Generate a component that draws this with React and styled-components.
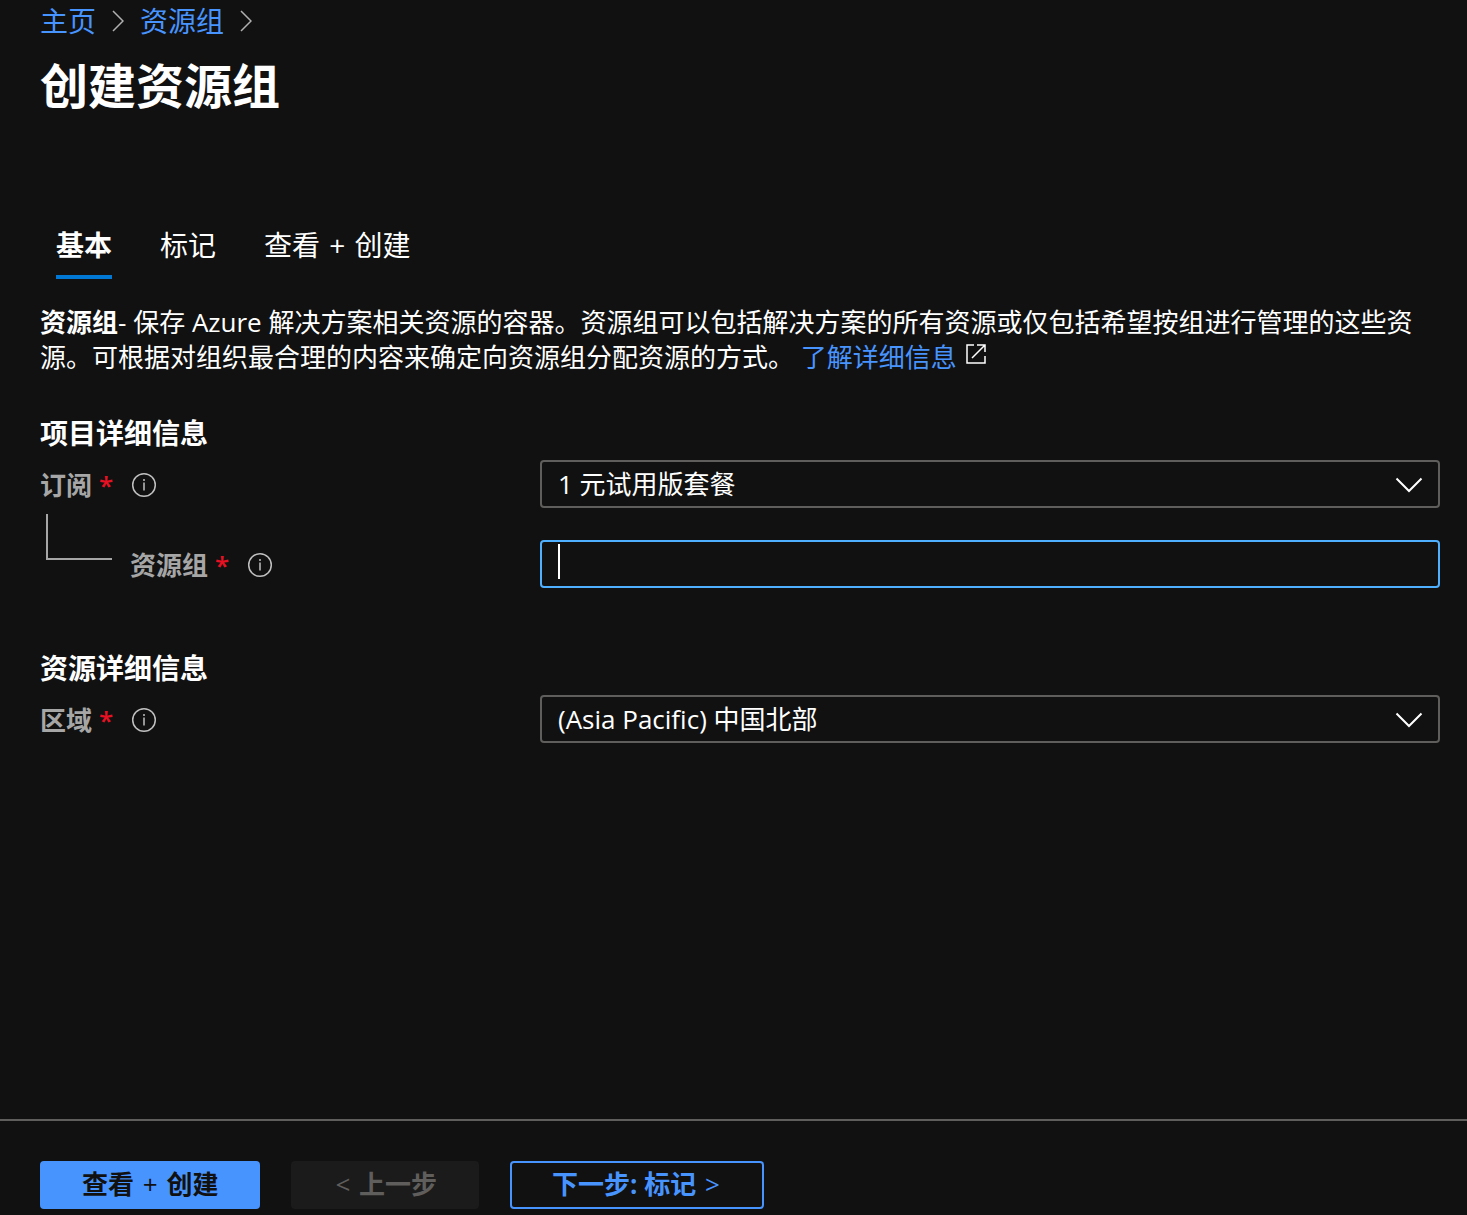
import React, { useState } from 'react';
import styled, { createGlobalStyle, css } from 'styled-components';

const GlobalStyle = createGlobalStyle`
	:root {
		--bg: #111111;
		--text: #ffffff;
		--label: #a6a6a6;
		--border: #605e5c;
		--accent: #4894fe;
		--focus: #4fb0ff;
		--required: #e81123;
	}

	*,
	*:before,
	*:after {
		box-sizing: border-box;
	}

	body {
		margin: 0;
		background-color: var(--bg);
		color: var(--text);
	}

	body,
	button,
	input,
	select {
		font-family: 'Open Sans', 'Noto Sans CJK SC', sans-serif;
		font-size: 26px;
		line-height: 35px;
	}
`;

const Page = styled.div`
	display: flex;
	flex-direction: column;
	min-height: 100vh;
`;

const Main = styled.main`
	flex: 1;
	padding: 0 27px 40px 40px;
`;

const Breadcrumb = styled.nav`
	display: flex;
	align-items: center;
	height: 42px;
	font-size: 28px;
`;

const Link = styled.a`
	color: var(--accent);
	text-decoration: none;
`;

const CrumbArrow = styled.svg`
	width: 12px;
	height: 22px;
	margin: 0 16px;
	fill: none;
	stroke: #b0b0b0;
	stroke-width: 1.5;
`;

const Title = styled.h1`
	margin: 14px 0 0;
	font-size: 48px;
	font-weight: 700;
	line-height: 60px;
`;

const Tabs = styled.div`
	display: flex;
	gap: 48px;
	margin-top: 107px;
	padding-left: 16px;
`;

const Tab = styled.button`
	height: 56px;
	padding: 0 0 7px;
	border: 0;
	border-bottom: 4px solid transparent;
	background: none;
	color: var(--text);
	font-size: 28px;

	${({ $active }) =>
		$active &&
		css`
			border-color: #0078d4;
			font-weight: 700;
		`}
`;

const Description = styled.p`
	margin: 26px 0 0;
`;

const ExternalIcon = styled.svg`
	width: 22px;
	height: 22px;
	margin-left: 8px;
	vertical-align: 2px;
	fill: none;
	stroke: var(--text);
	stroke-width: 1.5;
`;

const Section = styled.section`
	margin-top: 40px;
	padding-bottom: 22px;
`;

const SectionTitle = styled.h2`
	margin: 0 0 9px;
	font-size: 28px;
	font-weight: 700;
	line-height: 36px;
`;

const Row = styled.div`
	display: grid;
	grid-template-columns: 500px 1fr;
	align-items: center;
	min-height: 48px;

	& + & {
		margin-top: 32px;
	}
`;

const LabelCell = styled.div`
	display: flex;
	align-items: center;
	height: 48px;
	padding-top: 2px;
`;

// elbow line that ties a nested field to the one above it
const Connector = styled.span`
	align-self: flex-start;
	width: 66px;
	height: 46px;
	margin: -28px 18px 0 6px;
	border: solid var(--label);
	border-width: 0 0 2px 2px;
`;

const Label = styled.label`
	color: var(--label);
	font-weight: 700;
`;

const Required = styled.span`
	width: 14px;
	margin-left: 7px;
	color: var(--required);
	font-weight: 600;
`;

const InfoIcon = styled.svg`
	width: 26px;
	height: 26px;
	margin-left: 18px;
	fill: none;
	stroke: #c0c0c0;
	stroke-width: 1.5;
`;

const Control = styled.div`
	position: relative;
`;

const fieldStyles = css`
	display: block;
	width: 100%;
	height: 48px;
	padding: 0 16px;
	border: 2px solid var(--border);
	border-radius: 4px;
	outline: none;
	background-color: var(--bg);
	color: var(--text);
`;

const Select = styled.select`
	${fieldStyles}
	appearance: none;
`;

const Input = styled.input`
	${fieldStyles}
	border-color: var(--focus);
	caret-color: transparent;
`;

const Caret = styled.span`
	position: absolute;
	top: 4px;
	left: 18px;
	width: 2px;
	height: 35px;
	background-color: var(--text);
	pointer-events: none;
`;

const SelectArrow = styled.svg`
	position: absolute;
	top: 17px;
	right: 17px;
	width: 28px;
	height: 16px;
	fill: none;
	stroke: var(--text);
	stroke-width: 2;
	pointer-events: none;
`;

const Footer = styled.footer`
	display: flex;
	gap: 31px;
	padding: 40px 40px 6px;
	border-top: 2px solid #605e5c;
`;

const Button = styled.button`
	height: 48px;
	padding: 0 40px 2px;
	border: 2px solid var(--accent);
	border-radius: 4px;
	background-color: ${({ $primary }) => ($primary ? 'var(--accent)' : 'transparent')};
	color: ${({ $primary }) => ($primary ? 'var(--bg)' : 'var(--accent)')};
	font-weight: 700;

	&:disabled {
		border-color: #1b1b1b;
		background-color: #1b1b1b;
		color: #605e5c;
	}
`;

const Symbol = styled.span`
	margin: 0 2px;
	font-weight: 400;
`;

const Crumb = ({ children }) => (
	<>
		<Link href='#'>{children}</Link>
		<CrumbArrow viewBox='0 0 12 22' aria-hidden='true'>
			<path d='M1 1 L11 11 L1 21' />
		</CrumbArrow>
	</>
);

const Field = ({ id, label, nested, children }) => (
	<Row>
		<LabelCell>
			{nested && <Connector />}
			<Label htmlFor={id}>{label}</Label>
			<Required>*</Required>
			<InfoIcon viewBox='0 0 26 26' aria-hidden='true'>
				<circle cx='13' cy='13' r='11.3' />
				<path d='M13 10.5 V18.5 M13 7 V9' />
			</InfoIcon>
		</LabelCell>
		<Control>{children}</Control>
	</Row>
);

const Dropdown = ({ id, options }) => (
	<>
		<Select id={id}>
			{options.map((option) => (
				<option key={option}>{option}</option>
			))}
		</Select>
		<SelectArrow viewBox='0 0 28 16' aria-hidden='true'>
			<path d='M1.5 1.5 L14 14 L26.5 1.5' />
		</SelectArrow>
	</>
);

const tabs = [
	{ id: 'basics', title: '基本' },
	{ id: 'tags', title: '标记' },
	{
		id: 'review',
		title: (
			<>
				查看 <Symbol>+</Symbol> 创建
			</>
		),
	},
];

const App = () => {
	const [active, setActive] = useState('basics');
	const [name, setName] = useState('');

	return (
		<>
			<GlobalStyle />
			<Page>
				<Main>
					<Breadcrumb>
						<Crumb>主页</Crumb>
						<Crumb>资源组</Crumb>
					</Breadcrumb>
					<Title>创建资源组</Title>
					<Tabs role='tablist'>
						{tabs.map(({ id, title }) => (
							<Tab
								key={id}
								role='tab'
								aria-selected={id === active}
								$active={id === active}
								onClick={() => setActive(id)}
							>
								{title}
							</Tab>
						))}
					</Tabs>
					<Description>
						<strong>资源组</strong>- 保存 Azure
						解决方案相关资源的容器。资源组可以包括解决方案的所有资源或仅包括希望按组进行管理的这些资源。可根据对组织最合理的内容来确定向资源组分配资源的方式。{' '}
						<Link href='#'>
							了解详细信息
							<ExternalIcon viewBox='0 0 22 22' aria-hidden='true'>
								<path d='M9 2 H2 V20 H20 V13 M12 2 H20 V9 M20 2 L7 15' />
							</ExternalIcon>
						</Link>
					</Description>
					<Section>
						<SectionTitle>项目详细信息</SectionTitle>
						<Field id='subscription' label='订阅'>
							<Dropdown id='subscription' options={['1 元试用版套餐']} />
						</Field>
						<Field id='group' label='资源组' nested>
							<Input
								id='group'
								type='text'
								value={name}
								onChange={(e) => setName(e.target.value)}
							/>
							{!name && <Caret />}
						</Field>
					</Section>
					<Section>
						<SectionTitle>资源详细信息</SectionTitle>
						<Field id='region' label='区域'>
							<Dropdown id='region' options={['(Asia Pacific) 中国北部']} />
						</Field>
					</Section>
				</Main>
				<Footer>
					<Button $primary>
						查看 <Symbol>+</Symbol> 创建
					</Button>
					<Button disabled>
						<Symbol>&lt;</Symbol> 上一步
					</Button>
					<Button>
						下一步: 标记 <Symbol>&gt;</Symbol>
					</Button>
				</Footer>
			</Page>
		</>
	);
};

export default App;
